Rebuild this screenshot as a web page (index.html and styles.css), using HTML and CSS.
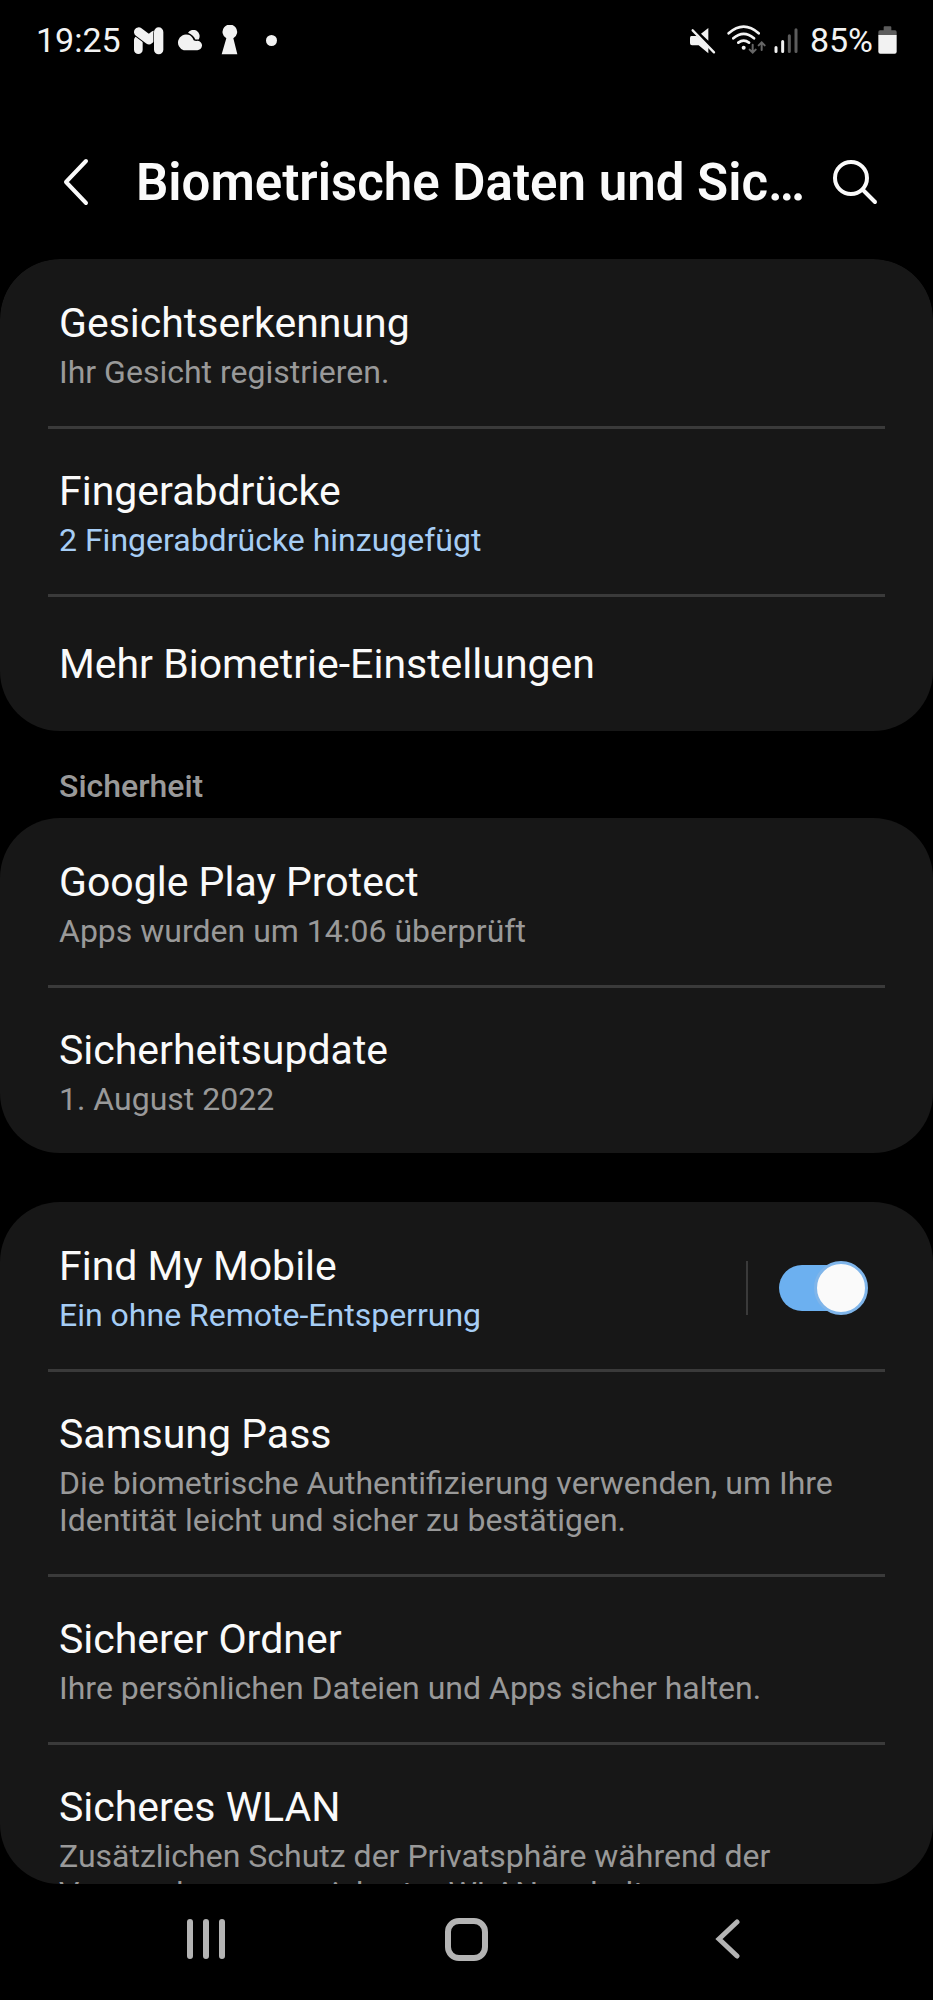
FILE: index.html
```html
<!DOCTYPE html>
<html lang="de">
<head>
    <meta charset="UTF-8">
    <meta name="viewport" content="width=device-width, initial-scale=1.0">
    <title>Biometrische Daten und Sicherheit</title>
    <link rel="stylesheet" href="styles.css">
</head>
<body>
    <div class="status-bar">
        <div class="status-left">
            <span class="clock">19:25</span>
            <svg class="icon-mail" width="31" height="29" viewBox="338 46 93 87" fill="none" stroke-linecap="round" stroke-linejoin="round">
                <path d="M354 88V117" stroke="#f2f2f2" stroke-width="26"/>
                <path d="M355 64L386 87L402 74" stroke="#000" stroke-width="34"/>
                <path d="M355 64L386 87L402 74" stroke="#f2f2f2" stroke-width="28"/>
                <path d="M415 66V117" stroke="#000" stroke-width="32"/>
                <path d="M415 64V117" stroke="#f2f2f2" stroke-width="28"/>
            </svg>
            <svg class="icon-cloud" width="27" height="21" viewBox="466 58 81 62">
                <path d="M505 66a17 17 0 0 1 32 20h-10q-6-14-22-20z" fill="#f2f2f2"/>
                <path d="M492 118a24 24 0 1 1 14-46q10 2 16 16q4 3 12 2a12 12 0 0 1-2 28z" fill="#f2f2f2"/>
            </svg>
            <svg class="icon-keyhole" width="17" height="30" viewBox="602 46 51 88">
                <path d="M618 85a22 22 0 1 1 21 0l12 48h-47z" fill="#f2f2f2"/>
            </svg>
            <span class="more-dot"></span>
        </div>
        <div class="status-right">
            <svg width="27" height="27" viewBox="55 50 81 81">
                <path d="M62 77h16l12 10 23 24v18L84 105H64q-6 0-6-6V83q0-6 4-6zM91 70l22-17v38z" fill="#f2f2f2"/>
                <path d="M70 60l64 66" stroke="#000" stroke-width="9"/>
                <path d="M66 60l64 66" stroke="#f2f2f2" stroke-width="7" stroke-linecap="round"/>
            </svg>
            <svg class="icon-wifi" width="40" height="30" viewBox="170 46 120 90" fill="none" stroke="#f2f2f2" stroke-width="8" stroke-linecap="round">
                <path d="M175 71Q220 31 265 71M189 86Q220 59 251 86M204 99Q220 87 236 99"/>
                <circle cx="220" cy="114" r="6" fill="#f2f2f2" stroke="none"/>
                <path d="M247 105v24m-9-9l9 9 9-9M274 121V98m-9 9l9-9 9 9" stroke="#666" stroke-width="6"/>
            </svg>
            <svg class="icon-signal" width="24" height="27" viewBox="311 50 72 80">
                <path d="M317 111v12M337 93v30" stroke="#f2f2f2" stroke-width="9" stroke-linecap="round"/>
                <path d="M357 76v47M377 58v65" stroke="#5c5c5c" stroke-width="9" stroke-linecap="round"/>
            </svg>
            <span class="battery-text">85%</span>
            <svg class="icon-battery" width="19" height="28" viewBox="625 48 57 84">
                <path d="M626 76V66q0-5 5-5h11v-9q0-3 3-3h17q3 0 3 3v9h11q5 0 5 5v10z" fill="#5c5c5c"/>
                <path d="M626 75h55v50q0 6-6 6h-43q-6 0-6-6z" fill="#f2f2f2"/>
            </svg>
        </div>
    </div>

    <header class="header">
        <button type="button" class="icon-button" aria-label="Zurück">
            <svg width="26" height="48" viewBox="0 0 26 48" fill="none" stroke="#fafafa" stroke-width="4" stroke-linecap="round" stroke-linejoin="round">
                <path d="M23 3L3 24L23 45"/>
            </svg>
        </button>
        <h1>Biometrische Daten und Sicherheit</h1>
        <button type="button" class="icon-button" aria-label="Suchen">
            <svg width="46" height="46" viewBox="0 0 46 46" fill="none" stroke="#fafafa" stroke-width="4" stroke-linecap="round">
                <circle cx="19" cy="19" r="16"/>
                <path d="M31 31L43 43"/>
            </svg>
        </button>
    </header>

    <main class="content">
        <section class="card">
            <a href="#gesicht" class="item">
                <span class="title">Gesichtserkennung</span>
                <span class="summary">Ihr Gesicht registrieren.</span>
            </a>
            <a href="#finger" class="item">
                <span class="title">Fingerabdrücke</span>
                <span class="summary active">2 Fingerabdrücke hinzugefügt</span>
            </a>
            <a href="#biometrie" class="item single">
                <span class="title">Mehr Biometrie-Einstellungen</span>
            </a>
        </section>

        <h2>Sicherheit</h2>
        <section class="card">
            <a href="#protect" class="item">
                <span class="title">Google Play Protect</span>
                <span class="summary">Apps wurden um 14:06 überprüft</span>
            </a>
            <a href="#update" class="item">
                <span class="title">Sicherheitsupdate</span>
                <span class="summary">1. August 2022</span>
            </a>
        </section>

        <section class="card card-gap">
            <div class="item switch-item">
                <label for="findMobile" class="switch-label">
                    <span class="title">Find My Mobile</span>
                    <span class="summary active">Ein ohne Remote-Entsperrung</span>
                </label>
                <span class="switch-line"></span>
                <input type="checkbox" id="findMobile" class="switch" checked>
            </div>
            <a href="#pass" class="item">
                <span class="title">Samsung Pass</span>
                <span class="summary">Die biometrische Authentifizierung verwenden, um Ihre Identität leicht und sicher zu bestätigen.</span>
            </a>
            <a href="#ordner" class="item">
                <span class="title">Sicherer Ordner</span>
                <span class="summary">Ihre persönlichen Dateien und Apps sicher halten.</span>
            </a>
            <a href="#wlan" class="item">
                <span class="title">Sicheres WLAN</span>
                <span class="summary">Zusätzlichen Schutz der Privatsphäre während der Verwendung ungesicherter WLANs erhalten.</span>
            </a>
        </section>
    </main>

    <nav class="nav-bar">
        <button type="button" aria-label="Letzte Apps">
            <svg width="40" height="42" viewBox="0 0 40 42" stroke="#b4b4b4" stroke-width="6" stroke-linecap="round">
                <path d="M4 4V38M20 4V38M36 4V38"/>
            </svg>
        </button>
        <button type="button" aria-label="Startseite">
            <svg width="44" height="44" viewBox="0 0 44 44" fill="none" stroke="#b4b4b4" stroke-width="6">
                <rect x="4" y="4" width="37" height="37" rx="11"/>
            </svg>
        </button>
        <button type="button" aria-label="Zurück">
            <svg width="26" height="42" viewBox="0 0 26 42" fill="none" stroke="#b4b4b4" stroke-width="5" stroke-linecap="round">
                <path d="M23 4L5 21L23 38"/>
            </svg>
        </button>
    </nav>
</body>
</html>
```
FILE: styles.css
```css
* {
    box-sizing: border-box;
}

body {
    font-family: Roboto, sans-serif;
    background-color: #000;
    color: #fafafa;
    display: flex;
    flex-direction: column;
    height: 100vh;
    margin: 0;
    overflow: hidden;
}

button {
    background: none;
    border: none;
    padding: 0;
    cursor: pointer;
}

svg {
    display: block;
    flex-shrink: 0;
}

/* Status bar */
.status-bar {
    display: flex;
    justify-content: space-between;
    align-items: center;
    flex-shrink: 0;
    height: 80px;
    padding: 0 36px;
    font-size: 34px;
    line-height: 40px;
    color: #f2f2f2;
}

.status-left, .status-right {
    display: flex;
    align-items: center;
}

.icon-mail {
    margin-left: 12px;
}

.icon-cloud {
    margin-left: 11px;
}

.icon-keyhole {
    margin-left: 19px;
}

.more-dot {
    width: 11px;
    height: 11px;
    margin-left: 28px;
    border-radius: 50%;
    background-color: #f2f2f2;
}

.icon-wifi {
    margin-left: 11px;
}

.icon-signal {
    margin-left: 7px;
}

.battery-text {
    margin-left: 12px;
}

.icon-battery {
    margin-left: 5px;
}

/* Header */
.header {
    display: flex;
    align-items: center;
    flex-shrink: 0;
    height: 179px;
    padding: 24px 55px 0 63px;
}

.header h1 {
    flex: 1;
    min-width: 0;
    margin: 0 24px 0 47px;
    padding-top: 2px;
    font-size: 51px;
    font-weight: 600;
    line-height: 60px;
    white-space: nowrap;
    overflow: hidden;
    text-overflow: ellipsis;
}

/* Settings list */
.content {
    flex: 1;
    min-height: 0;
    overflow: hidden;
    border-radius: 60px;
}

.card {
    padding: 0 48px;
    border-radius: 60px;
    background-color: #171717;
}

.card-gap {
    margin-top: 49px;
}

.item {
    display: block;
    padding: 39px 11px 35px;
    color: #fafafa;
    text-decoration: none;
}

.item + .item {
    padding-top: 37px;
    border-top: 3px solid #3a3a3a;
}

.item + .single {
    padding-top: 42px;
    padding-bottom: 42px;
}

.title {
    display: block;
    font-size: 41px;
    line-height: 50px;
}

.summary {
    display: block;
    margin-top: 6px;
    font-size: 32px;
    line-height: 37px;
    color: #999;
}

.summary.active {
    color: #a6cdf5;
}

h2 {
    margin: 0;
    padding: 37px 59px 13px;
    font-size: 32px;
    font-weight: 500;
    line-height: 37px;
    color: #999;
}

/* Switch */
.switch-item {
    display: flex;
    align-items: center;
    padding-right: 17px;
}

.switch-label {
    flex: 1;
}

.switch-line {
    width: 2px;
    height: 54px;
    margin-right: 31px;
    background-color: #3a3a3a;
}

.switch {
    appearance: none;
    position: relative;
    width: 89px;
    height: 54px;
    margin: 0;
    cursor: pointer;
}

.switch::before {
    content: "";
    position: absolute;
    top: 4px;
    left: 0;
    width: 84px;
    height: 46px;
    border-radius: 23px;
    background-color: #555;
}

.switch::after {
    content: "";
    position: absolute;
    top: 0;
    left: 0;
    box-sizing: border-box;
    width: 54px;
    height: 54px;
    border: 3px solid #777;
    border-radius: 50%;
    background-color: #fafafa;
}

.switch:checked::before {
    background-color: #6cb0f0;
}

.switch:checked::after {
    left: auto;
    right: 0;
    border-color: #7fb5ea;
}

/* Navigation bar */
.nav-bar {
    display: flex;
    flex-shrink: 0;
    height: 116px;
    padding: 0 76px 6px;
}

.nav-bar button {
    display: flex;
    flex: 1;
    justify-content: center;
    align-items: center;
}
```
